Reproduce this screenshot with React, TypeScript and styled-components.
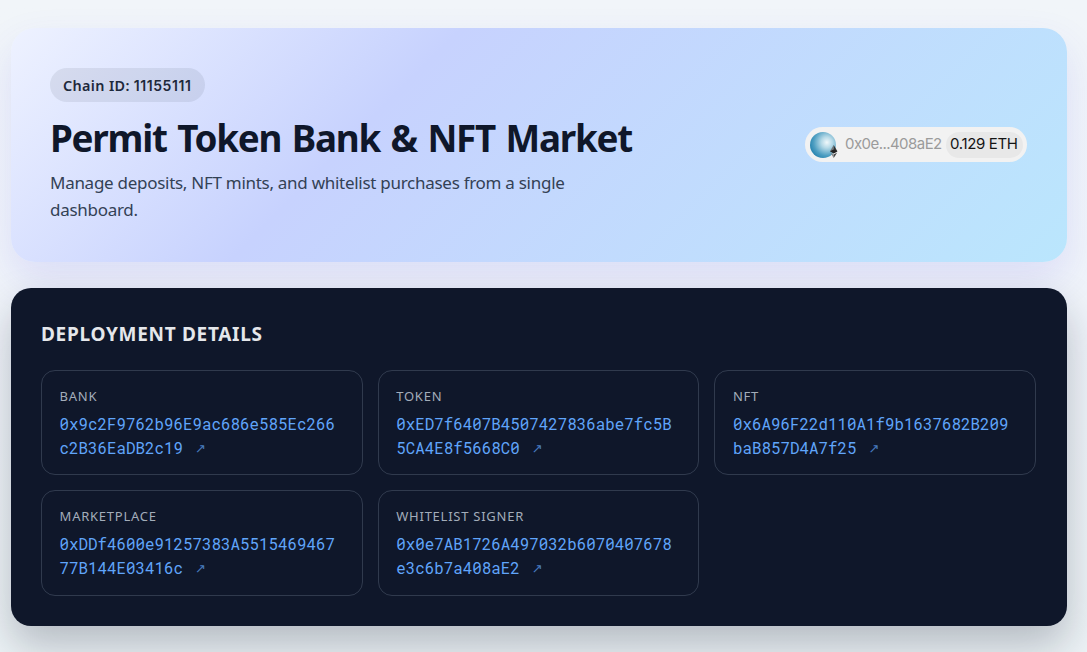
import React from 'react';
import styled, { createGlobalStyle } from 'styled-components';

const GlobalStyle = createGlobalStyle`
  * { box-sizing: border-box; }
  body {
    margin: 0;
    min-height: 652px;
    overflow: hidden;
    background: linear-gradient(180deg, #f1f5f9 0%, #f0f4fa 50%, #edf3f6 100%);
    font-family: 'Noto Sans', 'Open Sans', sans-serif;
    color: #0f172a;
  }
`;

const Page = styled.main`
  display: flex;
  flex-direction: column;
  gap: 26px;
  height: 652px;
  padding: 28px 20px 26px 11px;
`;

const Hero = styled.header`
  display: flex;
  align-items: flex-start;
  justify-content: space-between;
  height: 234px;
  padding: 40px 40px 0 39px;
  border-radius: 24px;
  background: linear-gradient(135deg, #eef2ff 0%, #c7d2fe 35%, #bae6fd 100%);
  box-shadow: 0 18px 40px rgba(79, 70, 229, 0.13);
`;

const Intro = styled.div`
  width: 600px;
`;

const ChainBadge = styled.div`
  display: flex;
  align-items: center;
  width: 155px;
  height: 34px;
  padding-left: 13px;
  border-radius: 17px;
  background: rgba(15, 23, 42, 0.08);
  color: #1e293b;
  font-size: 14.4px;
  font-weight: 600;
  letter-spacing: 0.35px;
  white-space: pre;
`;

const ChainNumber = styled.span`
  font-family: Inter, sans-serif;
  font-size: 14px;
  letter-spacing: 0.55px;
`;

const Title = styled.h1`
  margin: 12px 0 7px;
  font-size: 36.8px;
  line-height: 48px;
  font-weight: 700;
  letter-spacing: -1.25px;
  word-spacing: 2.2px;
  white-space: nowrap;
`;

const Subtitle = styled.p`
  margin: 0;
  width: 560px;
  color: #334155;
  font-size: 17px;
  line-height: 27px;
  letter-spacing: -0.28px;
`;

const Wallet = styled.button`
  display: flex;
  align-items: center;
  height: 35px;
  margin-top: 59px;
  padding: 0 4px 0 5px;
  border: 0;
  border-radius: 18px;
  background: #f2f2f2;
  font-family: Inter, sans-serif;
  font-size: 15px;
  white-space: nowrap;
`;

const Address = styled.span`
  width: 97px;
  margin: 0 4px 2px 7px;
  color: #9b9b9b;
  letter-spacing: -0.55px;
  text-align: left;
`;

const Balance = styled.span`
  width: 77px;
  height: 26px;
  padding-left: 4px;
  border-radius: 13px;
  background: #e8e8e8;
  color: #141414;
  line-height: 24px;
  text-align: left;
  letter-spacing: -0.35px;
`;

const Details = styled.section`
  height: 338px;
  padding: 31px 31px 30px 30px;
  border-radius: 20px;
  background: #0f172a;
  box-shadow: 0 20px 40px rgba(15, 23, 42, 0.25);
`;

const Heading = styled.h2`
  margin: 0 0 20px;
  color: #e5e7eb;
  font-size: 19px;
  line-height: 31px;
  font-weight: 700;
  letter-spacing: 0.7px;
  text-transform: uppercase;
`;

const Grid = styled.div`
  display: grid;
  grid-template-columns: repeat(3, minmax(0, 1fr));
  grid-template-rows: 105px 106px;
  gap: 15px;
`;

const Card = styled.article`
  padding: 15px 18px 15px 17.6px;
  border: 1px solid rgba(148, 163, 184, 0.25);
  border-radius: 14px;
`;

const Label = styled.div`
  margin-bottom: 5px;
  color: #a3adba;
  font-size: 13px;
  line-height: 21px;
  letter-spacing: 0.75px;
  text-transform: uppercase;
`;

const ContractLink = styled.a`
  display: block;
  width: 280px;
  color: #60a5fa;
  font-family: 'Roboto Mono', 'Liberation Mono', monospace;
  font-size: 15.84px;
  line-height: 24px;
  word-break: break-all;
`;

const Arrow = styled.span`
  display: inline-block;
  margin-left: 12px;
  font-family: 'DejaVu Sans', sans-serif;
  font-size: 13px;
  line-height: 14px;
  vertical-align: 1px;
  opacity: 0.7;
`;

const contracts = [
  { name: 'Bank', address: '0x9c2F9762b96E9ac686e585Ec266c2B36EaDB2c19' },
  { name: 'Token', address: '0xED7f6407B4507427836abe7fc5B5CA4E8f5668C0' },
  { name: 'NFT', address: '0x6A96F22d110A1f9b1637682B209baB857D4A7f25' },
  { name: 'Marketplace', address: '0xDDf4600e91257383A551546946777B144E03416c' },
  { name: 'Whitelist Signer', address: '0x0e7AB1726A497032b6070407678e3c6b7a408aE2' },
];

const WalletAvatar = () => (
  <svg width="28" height="28" viewBox="0 0 28 28">
    <defs>
      <radialGradient id="orb" cx="0.65" cy="0.4" r="0.72">
        <stop offset="0" stopColor="#f0f8fb" />
        <stop offset="0.3" stopColor="#b5d9e7" />
        <stop offset="0.7" stopColor="#4f9fc2" />
        <stop offset="1" stopColor="#207fac" />
      </radialGradient>
    </defs>
    <circle cx="13" cy="14" r="13" fill="url(#orb)" />
    <path d="M23.7 14L20 20.2L23.7 22.2Z" fill="#777" />
    <path d="M23.7 14L27.4 20.2L23.7 22.2Z" fill="#333" />
    <path d="M20 20.2L23.7 18.5L27.4 20.2L23.7 22.5Z" fill="#222" />
    <path d="M20.2 21.5L23.7 23.5V27Z" fill="#888" />
    <path d="M27.2 21.5L23.7 23.5V27Z" fill="#444" />
  </svg>
);

export default function App() {
  return (
    <>
      <GlobalStyle />
      <Page>
        <Hero>
          <Intro>
            <ChainBadge>Chain ID: <ChainNumber>11155111</ChainNumber></ChainBadge>
            <Title>Permit Token Bank &amp; NFT Market</Title>
            <Subtitle>Manage deposits, NFT mints, and whitelist purchases from a single dashboard.</Subtitle>
          </Intro>
          <Wallet>
            <WalletAvatar />
            <Address>0x0e...408aE2</Address>
            <Balance>0.129 ETH</Balance>
          </Wallet>
        </Hero>
        <Details>
          <Heading>Deployment Details</Heading>
          <Grid>
            {contracts.map((contract) => (
              <Card key={contract.name}>
                <Label>{contract.name}</Label>
                <ContractLink>
                  {contract.address}
                  <Arrow>↗</Arrow>
                </ContractLink>
              </Card>
            ))}
          </Grid>
        </Details>
      </Page>
    </>
  );
}
